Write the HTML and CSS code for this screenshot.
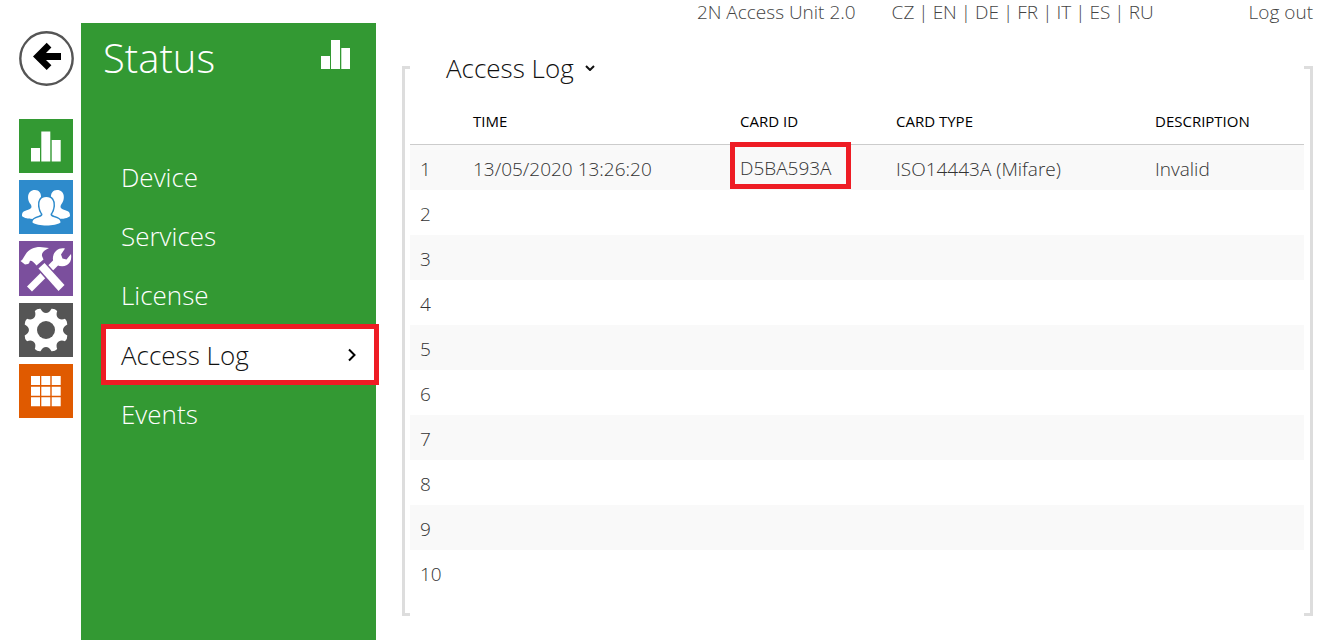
FILE: index.html
```html
<!DOCTYPE html>
<html lang="en">
<head>
<meta charset="utf-8">
<title>2N Access Unit 2.0</title>
<link rel="stylesheet" href="styles.css">
</head>
<body>
<div class="page">

<!--section icons-->
<nav class="rail" aria-label="Sections">
  <button class="back" type="button" aria-label="Back">
    <svg viewBox="0 0 55 55"><circle cx="27.5" cy="27.5" r="26.2" fill="#fff" stroke="#555" stroke-width="2.4"/><path d="M14 25.4 27.7 11.7 32.4 16.4 27 22H42v7H27l5.4 5.3-4.7 4.7z"/></svg>
  </button>
  <a class="tile status" href="#" aria-label="Status">
    <svg viewBox="0 0 54 54"><path d="M12 29h9v13.500h-9zM22.300 12.500h9v30h-9zM32.700 21h9v21.500h-9z"/></svg>
  </a>
  <a class="tile users" href="#" aria-label="Users">
    <svg viewBox="0 0 54 54">
      <path d="M16 10c4 0 6.500 3 6 8-.3 3-1 5-2.500 6.500-.5 2 0 3.500 2.500 4.500 4 1.500 6 4 6 7.500C24 40 6 40 3 36c0-3.500 1-4.500 4-5.500 3-1 5.500-2 5.500-3.500 0-1-.3-2-1-3C8 20 7.500 10 16 10z"/>
      <path d="M38 10c-4 0-6.500 3-6 8 .3 3 1 5 2.500 6.500.5 2 0 3.500-2.500 4.500-4 1.500-6 4-6 7.500C30 40 48 40 51 36c0-3.500-1-4.500-4-5.500-3-1-5.500-2-5.500-3.500 0-1 .3-2 1-3C46 20 46.500 10 38 10z"/>
      <path class="cut" d="M27.300 17c5.500 0 7.700 4 7.200 9-.3 3.500-1.500 6-3 8 0 2 1 2.500 3.500 3.300 4.500 1.200 6.500 2.500 6.500 5.200-5 4-23 4-28 0 0-2.700 2-4 6.500-5.200 2.500-.8 3.500-1.300 3.500-3.300-1.500-2-2.700-4.500-3-8-.5-5 1.300-9 6.800-9z"/>
    </svg>
  </a>
  <a class="tile hardware" href="#" aria-label="Hardware">
    <svg viewBox="0 0 54 54">
      <path d="M10.500 48 38 20.500" fill="none" stroke="#fff" stroke-width="7"/>
      <path d="M35 22c-2-3.500-1.500-9 2.500-12.500 2.500-2.200 5.500-2.700 8.500-2L42 13.500l1.500 4 4 1L52 13c.8 5-.5 9-4 11-3.500 2-7 1.500-10 0z"/>
      <path class="cut" d="M19.500 27.500 25.500 22 45.500 44 39.500 50z"/>
      <path d="M1.500 20C4 19 4.500 16 6.500 13.500 10 8 15 6 21 6l9 1c-4 2-7.500 4-7 8l1.500 3.500L17.500 24.500C14.500 20.500 12 19 11 20s0 2-2 3l-3 .5z"/>
    </svg>
  </a>
  <a class="tile system" href="#" aria-label="System">
    <svg viewBox="0 0 54 54"><g transform="translate(27 27)">
      <path d="M-5.500-21.300C-2.800-15.600 2.800-15.600 5.500-21.300Q9-21.500 11.200-19C9-13 13-9 19-11.200Q21.500-9 21.300-5.500C15.600-2.800 15.600 2.800 21.300 5.500Q21.500 9 19 11.200C13 9 9 13 11.200 19Q9 21.500 5.500 21.300C2.800 15.600-2.800 15.600-5.500 21.300Q-9 21.500-11.200 19C-9 13-13 9-19 11.200Q-21.500 9-21.300 5.500C-15.600 2.800-15.600-2.800-21.300-5.500Q-21.500-9-19-11.200C-13-9-9-13-11.200-19Q-9-21.500-5.500-21.300z"/>
      <circle class="hole" r="9"/></g>
    </svg>
  </a>
  <a class="tile apps" href="#" aria-label="Applications">
    <svg viewBox="0 0 54 54"><path d="M12 12h9v9h-9zm10.300 0h9v9h-9zm10.400 0h9v9h-9zM12 22.700h9v9h-9zm10.300 0h9v9h-9zm10.400 0h9v9h-9zM12 33.300h9v9h-9zm10.300 0h9v9h-9zm10.400 0h9v9h-9z"/></svg>
  </a>
</nav>

<!--green menu-->
<div class="menu">
  <div class="menu-head">
    <h1>Status</h1>
    <svg viewBox="0 0 30 30"><path d="M0 16h9v13H0zM10 0h9v29h-9zM20.300 8H29v21h-8.700z"/></svg>
  </div>
  <ul>
    <li><a href="#">Device</a></li>
    <li><a href="#">Services</a></li>
    <li><a href="#">License</a></li>
    <li><a class="active" href="#">Access Log <svg viewBox="0 0 8 14"><path d="M1 1.500 6.500 7 1 12.500"/></svg></a></li>
    <li><a href="#">Events</a></li>
  </ul>
</div>

<!--content-->
<div class="main">
  <div class="topbar">
    <span class="unit">2N Access Unit 2.0</span>
    <span class="langs"><a href="#">CZ</a>|<a href="#">EN</a>|<a href="#">DE</a>|<a href="#">FR</a>|<a href="#">IT</a>|<a href="#">ES</a>|<a href="#">RU</a></span>
    <a class="logout" href="#">Log out</a>
  </div>
  <div class="panel">
    <div class="bracket left"></div>
    <div class="log">
      <h2><button type="button">Access Log <svg viewBox="0 0 10 6"><path d="M1 1 5 5 9 1"/></svg></button></h2>
      <table>
        <thead>
          <tr><th class="num"></th><th class="time">TIME</th><th class="card">CARD ID</th><th class="type">CARD TYPE</th><th>DESCRIPTION</th></tr>
        </thead>
        <tbody>
          <tr><td>1</td><td>13/05/2020 13:26:20</td><td><span class="marked">D5BA593A</span></td><td>ISO14443A (Mifare)</td><td>Invalid</td></tr>
          <tr><td>2</td><td></td><td></td><td></td><td></td></tr>
          <tr><td>3</td><td></td><td></td><td></td><td></td></tr>
          <tr><td>4</td><td></td><td></td><td></td><td></td></tr>
          <tr><td>5</td><td></td><td></td><td></td><td></td></tr>
          <tr><td>6</td><td></td><td></td><td></td><td></td></tr>
          <tr><td>7</td><td></td><td></td><td></td><td></td></tr>
          <tr><td>8</td><td></td><td></td><td></td><td></td></tr>
          <tr><td>9</td><td></td><td></td><td></td><td></td></tr>
          <tr><td>10</td><td></td><td></td><td></td><td></td></tr>
        </tbody>
      </table>
    </div>
    <div class="bracket right"></div>
  </div>
</div>

</div>
</body>
</html>
```

FILE: styles.css
```css
*
{
  box-sizing: border-box;
}
body
{
  margin: 0;
  background: #fff;
  color: #333;
  font-family: "Open Sans", "Noto Sans", sans-serif;
  font-weight: 300;
  font-size: 19px;
}
a
{
  color: inherit;
  text-decoration: none;
}
h1, h2
{
  margin: 0;
  font-weight: 300;
}
svg
{
  display: block;
}
button
{
  border: 0;
  padding: 0;
  background: none;
  color: inherit;
  font: inherit;
  cursor: pointer;
}
.page
{
  display: flex;
  min-height: 100vh;
}

/*section icons*/
.rail
{
  display: flex;
  flex-direction: column;
  gap: 7px;
  padding: 31px 8px 0 19px;
}
.back
{
  width: 55px;
  height: 55px;
  margin: 0 -1px 26px 0;
}
.tile
{
  width: 54px;
  height: 54px;
}
.tile svg
{
  fill: #fff;
}
.status { background: #393; }
.users { background: #2e8bcc; }
.hardware { background: #7b4f9d; height: 55px; }
.system { background: #555; }
.apps { background: #e05a00; }
.cut
{
  stroke-width: 3;
  paint-order: stroke;
}
.users .cut { stroke: #2e8bcc; }
.hardware .cut { stroke: #7b4f9d; }
.hole
{
  fill: #555;
}

/*green menu*/
.menu
{
  width: 295px;
  flex-shrink: 0;
  margin-top: 23px;
  background: #393;
  color: #fff;
}
.menu-head
{
  display: flex;
  justify-content: space-between;
  align-items: flex-start;
  padding: 8px 25px 0 22px;
}
.menu-head h1
{
  font-size: 40px;
  line-height: 54px;
}
.menu-head svg
{
  width: 30px;
  height: 30px;
  margin-top: 9px;
  fill: #fff;
}
.menu ul
{
  list-style: none;
  margin: 62px 0 0;
  padding: 0 0 0 20px;
}
.menu li a
{
  display: flex;
  align-items: center;
  height: 59px;
  padding-left: 20px;
  font-size: 26px;
}
.menu li .active
{
  justify-content: space-between;
  height: 61px;
  margin: 0 -3px -1px 0;
  padding: 0 18px 0 15px;
  border: 5px solid #ee1c24;
  background: #fff;
  color: #111;
}
.active svg
{
  width: 8px;
  height: 14px;
  fill: none;
  stroke: #000;
  stroke-width: 2;
}

/*content*/
.main
{
  flex: 1;
  min-width: 0;
  padding: 0 24px 24px 26px;
}
.topbar
{
  display: flex;
  justify-content: flex-end;
  line-height: 24px;
  color: #444;
}
.langs
{
  display: flex;
  gap: 4px;
  margin: 0 95px 0 36px;
}
.panel
{
  display: flex;
  margin-top: 42px;
}
.bracket
{
  width: 8px;
  border: 3px solid #ddd;
}
.left
{
  border-right: 0;
}
.right
{
  width: 9px;
  border-left: 0;
}
.log
{
  flex: 1;
  padding-bottom: 21px;
}
.log h2
{
  margin-top: -17px;
  padding-left: 36px;
  color: #111;
  font-size: 26px;
  line-height: 38px;
}
.log h2 button
{
  display: flex;
  align-items: center;
  gap: 11px;
}
.log h2 svg
{
  width: 10px;
  height: 6px;
  fill: none;
  stroke: #111;
  stroke-width: 2;
}
table
{
  width: 100%;
  margin-top: 13px;
  table-layout: fixed;
  border-spacing: 0;
}
th, td
{
  height: 45px;
  padding: 2px 0 0;
  text-align: left;
  white-space: nowrap;
}
th
{
  padding: 0 0 2px;
  border-bottom: 1px solid #ccc;
  color: #000;
  font-size: 15px;
  font-weight: 400;
}
td:first-child
{
  padding-left: 10px;
}
tbody tr:nth-child(odd)
{
  background: #f9f9f9;
}
.num { width: 63px; }
.time { width: 267px; }
.card { width: 156px; }
.type { width: 259px; }
.marked
{
  display: inline-block;
  margin: -13px 0 -7px -10px;
  padding: 8px 14px 2px 5px;
  border: 5px solid #ee1c24;
  line-height: 27px;
}
```
